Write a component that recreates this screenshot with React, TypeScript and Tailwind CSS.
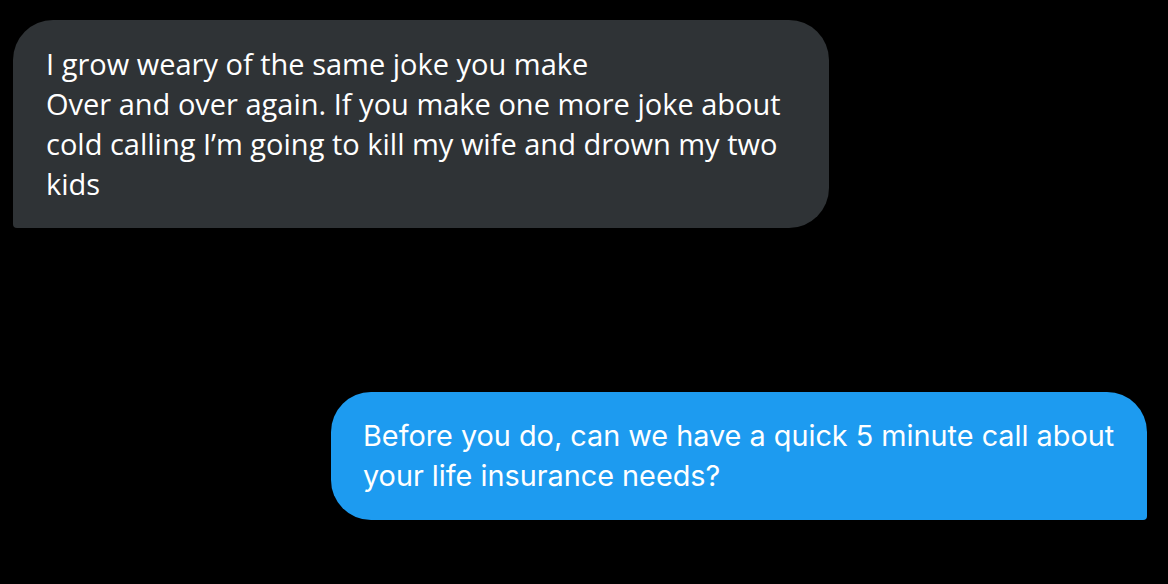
export default function App() {
  return (
    <div className="w-[1168px] h-[584px] bg-black flex flex-col overflow-hidden">
      <div className="ml-[13px] mt-[20px] w-[816px] h-[208px] bg-[#2f3336] rounded-tl-[40px] rounded-tr-[40px] rounded-br-[40px] rounded-bl-[4px] pl-[33px] pr-[20px] pt-6 text-white text-[29px] leading-[40px] font-['Open_Sans','Noto_Sans',sans-serif]">
        <p>I grow weary of the same joke you make</p>
        <p>Over and over again. If you make one more joke about cold calling I’m going to kill my wife and drown my two kids</p>
      </div>
      <div className="self-end mr-[21px] mt-[164px] w-[816px] h-[128px] bg-[#1d9bf0] rounded-tl-[40px] rounded-tr-[40px] rounded-bl-[40px] rounded-br-[4px] pl-[32px] pr-[20px] pt-6 text-white text-[28.8px] leading-[40px] font-['Inter','Roboto',sans-serif]">
        <p>Before you do, can we have a quick 5 minute call about your life insurance needs?</p>
      </div>
    </div>
  );
}
